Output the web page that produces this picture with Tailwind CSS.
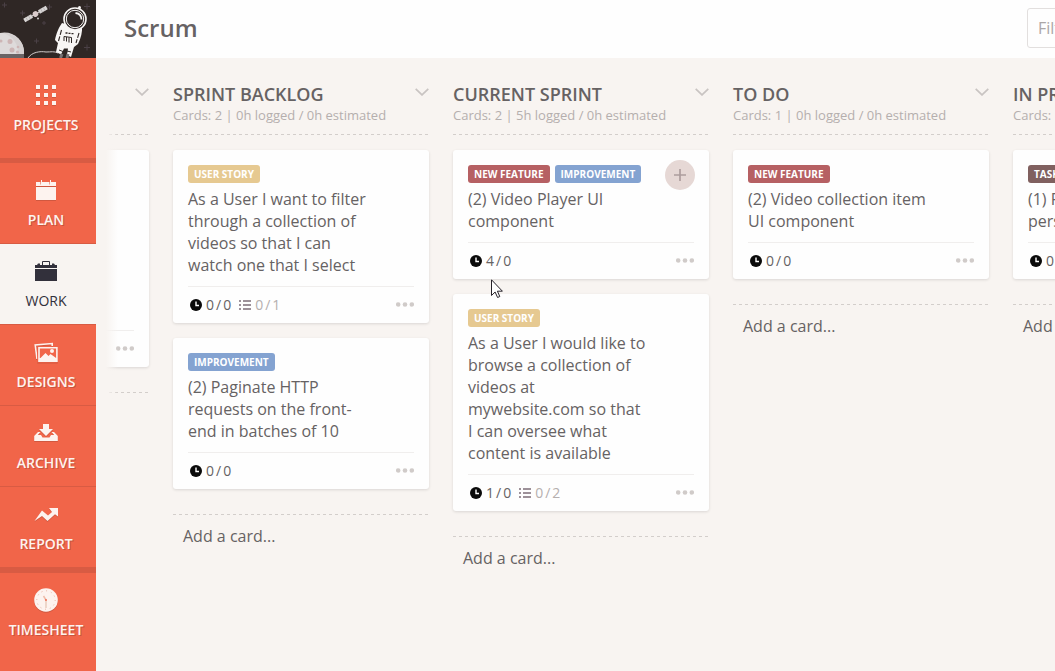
<!DOCTYPE html>
<html lang="en">
<head>
    <meta charset="UTF-8">
    <meta name="viewport" content="width=device-width, initial-scale=1.0">
    <title>Scrum</title>
    <script src="https://cdn.jsdelivr.net/npm/@tailwindcss/browser@4"></script>
</head>
<body class="bg-[#f8f4f1] font-['Open_Sans','Noto_Sans',sans-serif] text-[#666263]">

<!-- Shared icons -->
<svg class="hidden">
    <symbol id="clock" viewBox="0 0 12 12">
        <circle cx="6" cy="6" r="6" fill="#0a0a0a"/>
        <path d="M6 2.500v4h3" fill="none" stroke="#fff" stroke-width="1.400"/>
    </symbol>
    <symbol id="list" viewBox="0 0 12 12">
        <path d="M0 2h2M4 2h8M0 6h2M4 6h8M0 10h2M4 10h8" fill="none" stroke="#7d6d78" stroke-width="1.700"/>
    </symbol>
    <symbol id="dots" viewBox="0 0 18 5">
        <circle cx="2.200" cy="2.500" r="2.300"/><circle cx="9" cy="2.500" r="2.300"/><circle cx="15.800" cy="2.500" r="2.300"/>
    </symbol>
    <symbol id="chevron" viewBox="0 0 14 8">
        <path d="M.7.8 7 6.900 13.300.8" fill="none" stroke="#c9c4c2" stroke-width="1.700"/>
    </symbol>
</svg>

<div class="flex h-screen overflow-hidden">

    <!-- Sidebar -->
    <nav class="w-24 shrink-0 bg-[#f16549] text-[#fdf3ef] text-sm leading-[18px] font-semibold">
        <a href="#" aria-label="Home" class="block h-[58px]">
            <svg class="block w-24 h-[58px]" viewBox="0 0 96 58">
                <rect width="96" height="58" fill="#2f2725"/>
                <path d="M2 5h5M4.500 2.500v5M20 13h5M22.500 10.500v5M34 41h5M36.500 38.500v5M47 7h5M49.500 4.500v5M84 6.500h6M87 3.500v6M84 47.500h6M87 44.500v6M42 23h4M44 21v4" stroke="#4b4146" stroke-width="1"/>
                <!-- moon -->
                <circle cx="4.500" cy="52" r="19.500" fill="#dedada"/>
                <path d="M3 33a19.500 19.500 0 0 1 21 21h-6c1-9-5-18-15-21z" fill="#d5d0d0"/>
                <g fill="#cdb5b5"><circle cx="10" cy="41.500" r="2.500"/><circle cx="1" cy="41" r="1.500"/><circle cx="12" cy="50" r="2.500"/><circle cx="18" cy="47" r="1.300"/><circle cx="17.500" cy="52" r="1.500"/></g>
                <path d="M0 54h24v4H0z" fill="#6a6465"/>
                <!-- satellite -->
                <g transform="rotate(-30 35.500 14)">
                    <path d="M22.500 12h9v4h-9zM39.500 12h9v4h-9z" fill="#d8d5d5"/>
                    <path d="M25.500 12v4M28.500 12v4M42.500 12v4M45.500 12v4" stroke="#aaa5a5" stroke-width=".6"/>
                    <path d="M31 14h9" stroke="#d8d5d5"/>
                    <circle cx="35.500" cy="14" r="2.800" fill="#d9cbcb"/>
                </g>
                <circle cx="38" cy="18.500" r="1" fill="#cfcaca"/>
                <!-- astronaut -->
                <path d="M28 58c4-6 12-7 18-6 5 0 8-1 12 1" fill="none" stroke="#cfcaca" stroke-width="1"/>
                <path d="M62 23c-3 4-6 11-7 17l3 3-2 9 5 2.500 3-6h4l-1 6.500 4 2 3-10 4-3c3-6 4.500-12 4-18L76 27z" fill="#f8f6f5"/>
                <path d="M61.500 30 58.500 41M79 33 76 43" stroke="#2f2725" stroke-width="1.100" stroke-dasharray="5 1.500"/>
                <path d="M64 41v-4.500l7.500 1V43M66.500 37v4.500M69 37.500v5M59 50l4 1.500M67 51l4 1" fill="none" stroke="#2f2725" stroke-width="1"/>
                <path d="M65.500 33h2M68.500 33.300h2M71.500 33.600h2" stroke="#2f2725" stroke-width="1.300"/>
                <path d="m62 54-1.500 4M68 54l-1 4" stroke="#777172" stroke-width="3"/>
                <circle cx="79.500" cy="7.500" r="1.500" fill="#f8f6f5"/>
                <circle cx="75" cy="19" r="11" fill="#2f2725" stroke="#f8f6f5" stroke-width="1.600"/>
                <circle cx="75" cy="19" r="8.700" fill="#2f2725" stroke="#f8f6f5" stroke-width="1"/>
                <path d="M75.500 13c4 .5 6 3 6 6.500" fill="none" stroke="#f8f6f5" stroke-width="1.800"/>
            </svg>
        </a>
        <a href="#" class="flex flex-col items-center h-[105px] pr-1 pt-[25px] border-b-5 border-[#d85b43] text-shadow-[1px_1px_0_#c9543d]">
            <svg class="w-6 h-6 drop-shadow-[0_1px_0_#d05840]" viewBox="0 0 24 24" fill="currentColor">
                <path d="M2 2h4v4H2zM10 2h4v4h-4zM18 2h4v4h-4zM2 10h4v4H2zM10 10h4v4h-4zM18 10h4v4h-4zM2 18h4v4H2zM10 18h4v4h-4zM18 18h4v4h-4z"/>
            </svg>
            <span class="mt-[9px]">PROJECTS</span>
        </a>
        <a href="#" class="flex flex-col items-center h-[81px] pr-1 pt-[15px] border-b border-[#d85b43] text-shadow-[1px_1px_0_#c9543d]">
            <svg class="w-6 h-6 drop-shadow-[0_1px_0_#d05840]" viewBox="0 0 24 24" fill="currentColor">
                <path d="M2 4h20v4H2zM2 9h20v13H2zM7 2h1v3H7zM16 2h1v3h-1z"/>
                <path d="M6.500 4v2.500M15.500 4v2.500" stroke="#e98d79" stroke-width=".8"/>
            </svg>
            <span class="mt-[9px]">PLAN</span>
        </a>
        <a href="#" aria-current="page" class="flex flex-col items-center h-20 pr-1 pt-[15px] bg-[#f8f4f1] text-[#32303b] font-medium">
            <svg class="w-6 h-6" viewBox="0 0 24 24" fill="currentColor">
                <path d="M1 6h2l1-1.500h2V6h12V4.500h2L21 6h2v3H1zM1 10h22v12H1z"/>
                <path d="M8.500 6V2.500h7V6" fill="none" stroke="currentColor"/>
            </svg>
            <span class="mt-[9px]">WORK</span>
        </a>
        <a href="#" class="flex flex-col items-center h-[82px] pr-1 pt-[15px] border-y border-[#d85b43] text-shadow-[1px_1px_0_#c9543d]">
            <svg class="w-6 h-6 drop-shadow-[0_1px_0_#d05840]" viewBox="0 0 24 24">
                <path d="M3 19 1.200 5l17-1.500V6" fill="none" stroke="currentColor" stroke-width="1.600"/>
                <path d="M3.200 6.500h20.500v16H3.200z" fill="#f16549"/>
                <path d="M4.200 7H23.700v15H4.200zM5.800 8.600V18h.7l5-5 3 3 2-2 5.600 4V8.600z" fill="currentColor" fill-rule="evenodd"/>
                <circle cx="18" cy="11" r="2" fill="currentColor"/>
            </svg>
            <span class="mt-[9px]">DESIGNS</span>
        </a>
        <a href="#" class="flex flex-col items-center h-[81px] pr-1 pt-[15px] border-b border-[#d85b43] text-shadow-[1px_1px_0_#c9543d]">
            <svg class="w-6 h-6 drop-shadow-[0_1px_0_#d05840]" viewBox="0 0 24 24" fill="currentColor">
                <path d="M9 3h6v5h4l-7 7-7-7h4z"/>
                <path d="M4 11h2.500L3.800 14H7l1.500 2.500h7L17 14h3.200l-2.700-3H20l3.800 4v5H.2v-5z"/>
            </svg>
            <span class="mt-[9px]">ARCHIVE</span>
        </a>
        <a href="#" class="flex flex-col items-center h-[86px] pr-1 pt-[15px] border-b-6 border-[#d85b43] text-shadow-[1px_1px_0_#c9543d]">
            <svg class="w-6 h-6 drop-shadow-[0_1px_0_#d05840]" viewBox="0 0 24 24" fill="currentColor">
                <path d="M.5 19 8 8.500l6 5 4-3.500L15 6h9v8.500l-3-2.200L13.500 19 8 14z"/>
            </svg>
            <span class="mt-[9px]">REPORT</span>
        </a>
        <a href="#" class="flex flex-col items-center h-[98px] pr-1 pt-[15px] text-shadow-[1px_1px_0_#c9543d]">
            <svg class="w-6 h-6 drop-shadow-[0_1px_0_#d05840]" viewBox="0 0 24 24">
                <circle cx="12" cy="12" r="11.800" fill="currentColor"/>
                <circle cx="12" cy="12" r="9.200" fill="none" stroke="#e5a08f" stroke-width="1" stroke-dasharray=".8 4.017"/>
                <path d="M12 12v8" stroke="#ecd3c6" stroke-width="1.800"/>
                <path d="M12 12 9.500 8" stroke="#eebdaa" stroke-width="1.500"/>
                <circle cx="12" cy="12" r=".9" fill="#f16549"/>
            </svg>
            <span class="mt-[9px]">TIMESHEET</span>
        </a>
    </nav>

    <div class="flex-1 min-w-0 flex flex-col">

        <!-- Header -->
        <header class="h-[58px] shrink-0 bg-[#fefefe] pl-7 pb-[2px] flex items-center justify-between overflow-hidden">
            <h1 class="text-2xl font-semibold">Scrum</h1>
            <input type="text" aria-label="Filter cards" placeholder="Filter cards" class="w-[200px] h-10 -mr-[172px] px-[10px] shrink-0 border border-[#e2dfde] rounded-[3px] text-base placeholder:text-[#aba6a6]">
        </header>

        <!-- Board, scrolled so that the first list is mostly off to the left -->
        <main class="relative flex-1 ml-[10px] overflow-hidden">
            <div class="flex gap-6 -ml-[213px] pt-6">

                <section class="w-64 shrink-0">
                    <div class="h-[52px] flex justify-end">
                        <button type="button" aria-label="List menu" class="h-[9px] mt-[5px]"><svg class="w-[14px] h-2"><use href="#chevron"/></svg></button>
                    </div>
                    <div class="h-px bg-[repeating-linear-gradient(90deg,#d3cecb_0_3px,transparent_3px_6px)]"></div>
                    <article class="mt-[15px] h-[217px] px-[15px] flex flex-col justify-end bg-[#fefefe] rounded-[3px] shadow-[0_1px_3px_#0000001f]">
                        <div class="h-[37px] pb-[2px] border-t border-[#f0eeed] flex items-center justify-end">
                            <button type="button" aria-label="Card menu"><svg class="w-[18px] h-[5px] fill-[#d0cbc9]"><use href="#dots"/></svg></button>
                        </div>
                    </article>
                    <div class="mt-[25px] h-px bg-[repeating-linear-gradient(90deg,#d3cecb_0_3px,transparent_3px_6px)]"></div>
                </section>

                <section class="w-64 shrink-0">
                    <div class="h-[52px] flex justify-between">
                        <div>
                            <h2 class="text-lg leading-6 font-semibold">SPRINT BACKLOG</h2>
                            <p class="text-[13px] leading-[18px] text-[#b5afae]">Cards: 2 | 0h logged / 0h estimated</p>
                        </div>
                        <button type="button" aria-label="List menu" class="h-[9px] mt-[5px]"><svg class="w-[14px] h-2"><use href="#chevron"/></svg></button>
                    </div>
                    <div class="h-px bg-[repeating-linear-gradient(90deg,#d3cecb_0_3px,transparent_3px_6px)]"></div>
                    <article class="mt-[15px] px-[15px] pt-[15px] bg-[#fefefe] rounded-[3px] shadow-[0_1px_3px_#0000001f]">
                        <div class="flex gap-[5px] text-[10px] leading-[18px] font-bold text-white">
                            <span class="px-[6px] rounded-[3px] bg-[#e6c991]">USER STORY</span>
                        </div>
                        <h3 class="mt-[5px] mb-[10px] pr-11 text-base leading-[22px]">As a User I want to filter through a collection of videos so that I can watch one that I select</h3>
                        <div class="h-[37px] pl-[2px] border-t border-[#f0eeed] flex items-center text-sm">
                            <svg class="w-3 h-3"><use href="#clock"/></svg>
                            <span class="ml-1 flex gap-[2px]"><span>0</span><span>/</span><span>0</span></span>
                            <svg class="ml-2 w-3 h-3"><use href="#list"/></svg>
                            <span class="ml-1 flex gap-[2px] text-[#b5afae]"><span>0</span><span>/</span><span>1</span></span>
                            <button type="button" aria-label="Card menu" class="ml-auto pb-[2px]"><svg class="w-[18px] h-[5px] fill-[#d0cbc9]"><use href="#dots"/></svg></button>
                        </div>
                    </article>
                    <article class="mt-[15px] px-[15px] pt-[15px] bg-[#fefefe] rounded-[3px] shadow-[0_1px_3px_#0000001f]">
                        <div class="flex gap-[5px] text-[10px] leading-[18px] font-bold text-white">
                            <span class="px-[6px] rounded-[3px] bg-[#84a3d1]">IMPROVEMENT</span>
                        </div>
                        <h3 class="mt-[5px] mb-[10px] pr-11 text-base leading-[22px]">(2) Paginate HTTP requests on the front-end in batches of 10</h3>
                        <div class="h-[37px] pl-[2px] border-t border-[#f0eeed] flex items-center text-sm">
                            <svg class="w-3 h-3"><use href="#clock"/></svg>
                            <span class="ml-1 flex gap-[2px]"><span>0</span><span>/</span><span>0</span></span>
                            <button type="button" aria-label="Card menu" class="ml-auto pb-[2px]"><svg class="w-[18px] h-[5px] fill-[#d0cbc9]"><use href="#dots"/></svg></button>
                        </div>
                    </article>
                    <div class="mt-[25px] h-px bg-[repeating-linear-gradient(90deg,#d3cecb_0_3px,transparent_3px_6px)]"></div>
                    <button type="button" class="mt-[9px] pl-[10px] text-base">Add a card...</button>
                </section>

                <section class="w-64 shrink-0">
                    <div class="h-[52px] flex justify-between">
                        <div>
                            <h2 class="text-lg leading-6 font-semibold">CURRENT SPRINT</h2>
                            <p class="text-[13px] leading-[18px] text-[#b5afae]">Cards: 2 | 5h logged / 0h estimated</p>
                        </div>
                        <button type="button" aria-label="List menu" class="h-[9px] mt-[5px]"><svg class="w-[14px] h-2"><use href="#chevron"/></svg></button>
                    </div>
                    <div class="h-px bg-[repeating-linear-gradient(90deg,#d3cecb_0_3px,transparent_3px_6px)]"></div>
                    <article class="relative mt-[15px] px-[15px] pt-[15px] bg-[#fefefe] rounded-[3px] shadow-[0_1px_3px_#0000001f]">
                        <button type="button" aria-label="Assign member" class="absolute top-[10px] right-[14px] w-[30px] h-[30px] rounded-full bg-[#e6d8d5] flex items-center justify-center">
                            <svg class="w-3 h-3" viewBox="0 0 12 12"><path d="M0 6h12M6 0v12" stroke="#ad9d9d" stroke-width="1.700"/></svg>
                        </button>
                        <div class="flex gap-[5px] text-[10px] leading-[18px] font-bold text-white">
                            <span class="px-[6px] rounded-[3px] bg-[#b66063]">NEW FEATURE</span>
                            <span class="px-[6px] rounded-[3px] bg-[#84a3d1]">IMPROVEMENT</span>
                        </div>
                        <h3 class="mt-[5px] mb-[10px] pr-11 text-base leading-[22px]">(2) Video Player UI component</h3>
                        <div class="h-[37px] pl-[2px] border-t border-[#f0eeed] flex items-center text-sm">
                            <svg class="w-3 h-3"><use href="#clock"/></svg>
                            <span class="ml-1 flex gap-[2px]"><span>4</span><span>/</span><span>0</span></span>
                            <button type="button" aria-label="Card menu" class="ml-auto pb-[2px]"><svg class="w-[18px] h-[5px] fill-[#d0cbc9]"><use href="#dots"/></svg></button>
                        </div>
                        <!-- mouse pointer -->
                        <svg class="absolute left-[38px] top-[129px] w-3 h-[19px]" viewBox="0 0 12 19">
                            <path d="M.5.8v15.700l3.600-3.500 2.500 5.500 2.200-1-2.400-5.300h5z" fill="#fff" stroke="#26222a"/>
                        </svg>
                    </article>
                    <article class="mt-[15px] px-[15px] pt-[15px] bg-[#fefefe] rounded-[3px] shadow-[0_1px_3px_#0000001f]">
                        <div class="flex gap-[5px] text-[10px] leading-[18px] font-bold text-white">
                            <span class="px-[6px] rounded-[3px] bg-[#e6c991]">USER STORY</span>
                        </div>
                        <h3 class="mt-[5px] mb-[10px] pr-12 text-base leading-[22px]">As a User I would like to browse a collection of videos at mywebsite.com so that I can oversee what content is available</h3>
                        <div class="h-[37px] pl-[2px] border-t border-[#f0eeed] flex items-center text-sm">
                            <svg class="w-3 h-3"><use href="#clock"/></svg>
                            <span class="ml-1 flex gap-[2px]"><span>1</span><span>/</span><span>0</span></span>
                            <svg class="ml-2 w-3 h-3"><use href="#list"/></svg>
                            <span class="ml-1 flex gap-[2px] text-[#b5afae]"><span>0</span><span>/</span><span>2</span></span>
                            <button type="button" aria-label="Card menu" class="ml-auto pb-[2px]"><svg class="w-[18px] h-[5px] fill-[#d0cbc9]"><use href="#dots"/></svg></button>
                        </div>
                    </article>
                    <div class="mt-[25px] h-px bg-[repeating-linear-gradient(90deg,#d3cecb_0_3px,transparent_3px_6px)]"></div>
                    <button type="button" class="mt-[9px] pl-[10px] text-base">Add a card...</button>
                </section>

                <section class="w-64 shrink-0">
                    <div class="h-[52px] flex justify-between">
                        <div>
                            <h2 class="text-lg leading-6 font-semibold">TO DO</h2>
                            <p class="text-[13px] leading-[18px] text-[#b5afae]">Cards: 1 | 0h logged / 0h estimated</p>
                        </div>
                        <button type="button" aria-label="List menu" class="h-[9px] mt-[5px]"><svg class="w-[14px] h-2"><use href="#chevron"/></svg></button>
                    </div>
                    <div class="h-px bg-[repeating-linear-gradient(90deg,#d3cecb_0_3px,transparent_3px_6px)]"></div>
                    <article class="mt-[15px] px-[15px] pt-[15px] bg-[#fefefe] rounded-[3px] shadow-[0_1px_3px_#0000001f]">
                        <div class="flex gap-[5px] text-[10px] leading-[18px] font-bold text-white">
                            <span class="px-[6px] rounded-[3px] bg-[#b66063]">NEW FEATURE</span>
                        </div>
                        <h3 class="mt-[5px] mb-[10px] pr-11 text-base leading-[22px]">(2) Video collection item UI component</h3>
                        <div class="h-[37px] pl-[2px] border-t border-[#f0eeed] flex items-center text-sm">
                            <svg class="w-3 h-3"><use href="#clock"/></svg>
                            <span class="ml-1 flex gap-[2px]"><span>0</span><span>/</span><span>0</span></span>
                            <button type="button" aria-label="Card menu" class="ml-auto pb-[2px]"><svg class="w-[18px] h-[5px] fill-[#d0cbc9]"><use href="#dots"/></svg></button>
                        </div>
                    </article>
                    <div class="mt-[25px] h-px bg-[repeating-linear-gradient(90deg,#d3cecb_0_3px,transparent_3px_6px)]"></div>
                    <button type="button" class="mt-[9px] pl-[10px] text-base">Add a card...</button>
                </section>

                <section class="w-64 shrink-0">
                    <div class="h-[52px] flex justify-between">
                        <div>
                            <h2 class="text-lg leading-6 font-semibold">IN PROGRESS</h2>
                            <p class="text-[13px] leading-[18px] text-[#b5afae]">Cards: 1 | 0h logged / 0h estimated</p>
                        </div>
                        <button type="button" aria-label="List menu" class="h-[9px] mt-[5px]"><svg class="w-[14px] h-2"><use href="#chevron"/></svg></button>
                    </div>
                    <div class="h-px bg-[repeating-linear-gradient(90deg,#d3cecb_0_3px,transparent_3px_6px)]"></div>
                    <article class="mt-[15px] px-[15px] pt-[15px] bg-[#fefefe] rounded-[3px] shadow-[0_1px_3px_#0000001f]">
                        <div class="flex gap-[5px] text-[10px] leading-[18px] font-bold text-white">
                            <span class="px-[6px] rounded-[3px] bg-[#80605f]">TASK</span>
                        </div>
                        <h3 class="mt-[5px] mb-[10px] pr-11 text-base leading-[22px]">(1) Player state<br>persistence</h3>
                        <div class="h-[37px] pl-[2px] border-t border-[#f0eeed] flex items-center text-sm">
                            <svg class="w-3 h-3"><use href="#clock"/></svg>
                            <span class="ml-1 flex gap-[2px]"><span>0</span><span>/</span><span>0</span></span>
                            <button type="button" aria-label="Card menu" class="ml-auto pb-[2px]"><svg class="w-[18px] h-[5px] fill-[#d0cbc9]"><use href="#dots"/></svg></button>
                        </div>
                    </article>
                    <div class="mt-[25px] h-px bg-[repeating-linear-gradient(90deg,#d3cecb_0_3px,transparent_3px_6px)]"></div>
                    <button type="button" class="mt-[9px] pl-[10px] text-base">Add a card...</button>
                </section>
            </div>
            <!-- fade at the scroll edge -->
            <div class="absolute inset-y-0 left-0 w-3 bg-linear-to-r from-[#f8f4f1] to-[#f8f4f1]/0 pointer-events-none"></div>
        </main>
    </div>
</div>

</body>
</html>
